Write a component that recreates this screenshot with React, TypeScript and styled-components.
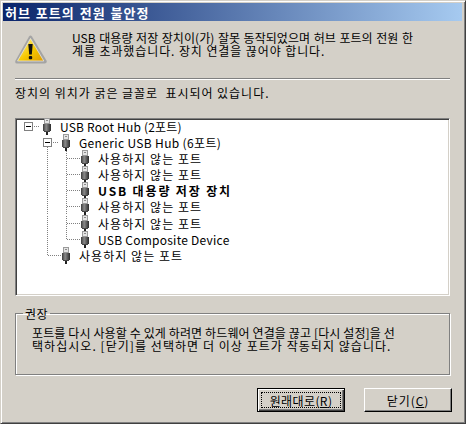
import React from 'react';
import styled, { createGlobalStyle } from 'styled-components';

const GlobalStyle = createGlobalStyle`
    html, body {
        margin: 0;
        padding: 0;
        width: 466px;
        height: 424px;
        overflow: hidden;
        background: #d4d0c8;
    }
`;

const Window = styled.div`
    box-sizing: border-box;
    width: 466px;
    height: 424px;
    display: flex;
    flex-direction: column;
    padding: 3px;
    background: #d4d0c8;
    border-top: 1px solid #d4d0c8;
    border-left: 1px solid #d4d0c8;
    border-right: 1px solid #404040;
    border-bottom: 1px solid #404040;
    box-shadow: inset 1px 1px 0 #fff, inset -1px -1px 0 #808080;
    font-family: "Noto Sans CJK KR", "Liberation Sans", sans-serif;
    font-size: 12px;
    color: #000;
`;

const TitleBar = styled.div`
    height: 18px;
    flex: none;
    display: flex;
    align-items: center;
    padding-left: 2px;
    margin: -1px 0 0 -1px;
    background: linear-gradient(90deg, #0a246a 0%, #a6caf0 100%);
    color: #fff;
    font-size: 13px;
    font-weight: 700;
    letter-spacing: 1px;
    word-spacing: 1px;
    white-space: nowrap;
`;

const Content = styled.div`
    flex: 1;
    display: flex;
    flex-direction: column;
    padding: 0 12px 0 11px;
`;

const Header = styled.div`
    display: flex;
    height: 57px;
    flex: none;
    padding-top: 10px;
    box-sizing: border-box;
`;

const Line = styled.div<{ $spacing: number; $wordGap?: number }>`
    height: 13px;
    line-height: 13px;
    white-space: pre;
    letter-spacing: ${p => p.$spacing}px;
    word-spacing: ${p => p.$wordGap ?? 0}px;
`;

const WarningSlot = styled.div`
    width: 57px;
    flex: none;
    padding-top: 4px;
`;

const Separator = styled.div`
    height: 1px;
    flex: none;
    background: #808080;
    border-bottom: 1px solid #fff;
`;

const Hint = styled.div`
    height: 38px;
    flex: none;
    padding-top: 6px;
    box-sizing: border-box;
`;

const TreeBox = styled.div`
    box-sizing: border-box;
    height: 178px;
    flex: none;
    background: #fff;
    border-top: 1px solid #808080;
    border-left: 1px solid #808080;
    border-right: 1px solid #fff;
    border-bottom: 1px solid #fff;
    box-shadow: inset 1px 1px 0 #404040, inset -1px -1px 0 #d4d0c8;
`;

const Row = styled.div`
    display: flex;
    height: 16.1px;
    align-items: stretch;
    padding-left: 3px;
`;

const RowLabel = styled.span<{ $bold?: boolean; $spacing: number }>`
    margin-left: 9px;
    line-height: 16px;
    white-space: nowrap;
    letter-spacing: ${p => p.$spacing}px;
    font-weight: ${p => (p.$bold ? 700 : 400)};
`;

const GroupBox = styled.fieldset`
    box-sizing: border-box;
    height: 68px;
    flex: none;
    margin: 11px 0 0;
    padding: 0;
    border: 1px solid #808080;
    box-shadow: inset 1px 1px 0 #fff, 1px 1px 0 #fff;
    border-radius: 0;
`;

const GroupLegend = styled.legend`
    margin-left: 7px;
    padding: 0 2px;
    line-height: 13px;
    letter-spacing: 0.5px;
`;

const GroupText = styled.div`
    margin: 6px 0 0 16px;
`;

const Footer = styled.div`
    display: flex;
    justify-content: flex-end;
    gap: 19px;
    margin: 13px -2px 0 0;
`;

const Button = styled.button<{ $default?: boolean }>`
    box-sizing: border-box;
    width: 88px;
    height: 24px;
    padding: 0;
    background: #d4d0c8;
    font: inherit;
    letter-spacing: ${p => (p.$default ? 0.4 : 0.9)}px;
    color: #000;
    position: relative;
    border: 1px solid #000;
    border-top-color: ${p => (p.$default ? '#000' : '#fff')};
    border-left-color: ${p => (p.$default ? '#000' : '#fff')};
    box-shadow: ${p =>
        p.$default
            ? 'inset 1px 1px 0 #fff, inset -1px -1px 0 #404040, inset -2px -2px 0 #808080'
            : 'inset -1px -1px 0 #808080'};
`;

const FocusRing = styled.span`
    display: flex;
    align-items: center;
    justify-content: center;
    position: absolute;
    inset: 3px;
    outline: 1px dotted #000;
    outline-offset: -1px;
`;

const GuideSvg = styled.svg`
    width: 19px;
    height: 16px;
    flex: none;
    display: block;
    overflow: visible;
`;

const IconSvg = styled.svg`
    width: 8px;
    height: 17px;
    flex: none;
    margin: -1px 0 0 5px;
    overflow: visible;
    display: block;
`;

type GuideKind = 'blank' | 'pipe' | 'tee' | 'elbow' | 'box' | 'boxPipe';

const dots = '#808080';

// one tree-line cell, drawn dot by dot like the win32 tree view
const Guide: React.FC<{ kind: GuideKind }> = ({ kind }) => {
    const vertical = kind === 'pipe' || kind === 'tee';
    const down = kind === 'boxPipe';
    return (
        <GuideSvg viewBox="0 0 19 16" shapeRendering="crispEdges">
            {(vertical || kind === 'elbow') && (
                <line x1="9.5" y1="0" x2="9.5" y2={vertical ? 16 : 8} stroke={dots} strokeDasharray="1 1" />
            )}
            {(kind === 'tee' || kind === 'elbow') && (
                <line x1="10" y1="7.5" x2="23" y2="7.5" stroke={dots} strokeDasharray="1 1" />
            )}
            {(kind === 'box' || kind === 'boxPipe') && (
                <>
                    <line x1="15" y1="7.5" x2="21" y2="7.5" stroke={dots} strokeDasharray="1 1" />
                    {down && <line x1="9.5" y1="12" x2="9.5" y2="16" stroke={dots} strokeDasharray="1 1" />}
                    <rect x="5.5" y="3.5" width="8" height="8" fill="#fff" stroke="#808080" />
                    <line x1="7" y1="7.5" x2="12" y2="7.5" stroke="#000" />
                </>
            )}
        </GuideSvg>
    );
};

const UsbIcon: React.FC = () => (
    <IconSvg viewBox="0 0 8 17" shapeRendering="crispEdges">
        <defs>
            <linearGradient id="usbBody" x1="0" x2="1" y1="0" y2="0">
                <stop offset="0" stopColor="#3a3a3a" />
                <stop offset="0.4" stopColor="#8a8a8a" />
                <stop offset="1" stopColor="#2a2a2a" />
            </linearGradient>
        </defs>
        <rect x="1.5" y="0.5" width="5" height="5" fill="#e4e4e4" stroke="#9a9a9a" />
        <rect x="3" y="2" width="2" height="1" fill="#8a8a8a" />
        <rect x="0" y="6" width="8" height="7" fill="url(#usbBody)" />
        <rect x="1" y="13" width="6" height="1" fill="#444" />
        <rect x="3" y="14" width="2" height="3" fill="#222" />
    </IconSvg>
);

const WarningSvg = styled.svg`
    display: block;
    width: 32px;
    height: 29px;
`;

const WarningIcon: React.FC = () => (
    <WarningSvg viewBox="0 0 32 29">
        <defs>
            <linearGradient id="warnFill" x1="0" x2="1" y1="0" y2="1">
                <stop offset="0" stopColor="#fff6a0" />
                <stop offset="0.55" stopColor="#f7c800" />
                <stop offset="1" stopColor="#e09a00" />
            </linearGradient>
        </defs>
        <path d="M14 1.5 Q15.5 -0.5 17 1.5 L31.5 25.5 Q32.5 28.5 29.5 28.5 L2 28.5 Q-0.5 28.5 0.5 25.5 Z" fill="#a4a4a4" />
        <path d="M15.5 3.5 L28.8 26 L2.5 26 Z" fill="url(#warnFill)" stroke="#e2e2e2" strokeWidth="0.8" />
        <path d="M13.3 9 L17.7 9 L16.8 19.5 L14.2 19.5 Z" fill="#111" />
        <rect x="13.8" y="21" width="3.4" height="3.2" rx="1" fill="#111" />
    </WarningSvg>
);

type TreeItem = { guides: GuideKind[]; label: string; spacing: number; bold?: boolean };

const unused = '사용하지 않는 포트';

const treeItems: TreeItem[] = [
    { guides: ['box'], label: 'USB Root Hub (2포트)', spacing: 0.2 },
    { guides: ['blank', 'boxPipe'], label: 'Generic USB Hub (6포트)', spacing: 0.35 },
    { guides: ['blank', 'pipe', 'tee'], label: unused, spacing: 1.05 },
    { guides: ['blank', 'pipe', 'tee'], label: unused, spacing: 1.05 },
    { guides: ['blank', 'pipe', 'tee'], label: 'USB 대용량 저장 장치', spacing: 1.85, bold: true },
    { guides: ['blank', 'pipe', 'tee'], label: unused, spacing: 1.05 },
    { guides: ['blank', 'pipe', 'tee'], label: unused, spacing: 1.05 },
    { guides: ['blank', 'pipe', 'elbow'], label: 'USB Composite Device', spacing: 0.25 },
    { guides: ['blank', 'elbow'], label: unused, spacing: 1.05 },
];

const App: React.FC = () => (
    <>
        <GlobalStyle />
        <Window>
            <TitleBar>허브 포트의 전원 불안정</TitleBar>
            <Content>
                <Header>
                    <WarningSlot>
                        <WarningIcon />
                    </WarningSlot>
                    <div>
                        <Line $spacing={0.05} $wordGap={0.8}>USB 대용량 저장 장치이(가) 잘못 동작되었으며 허브 포트의 전원 한</Line>
                        <Line $spacing={0.9}>계를 초과했습니다. 장치 연결을 끊어야 합니다.</Line>
                    </div>
                </Header>
                <Separator />
                <Hint>
                    <Line $spacing={0.97}>장치의 위치가 굵은 글꼴로  표시되어 있습니다.</Line>
                </Hint>
                <TreeBox>
                    {treeItems.map((item, index) => (
                        <Row key={index}>
                            {item.guides.map((kind, i) => (
                                <Guide key={i} kind={kind} />
                            ))}
                            <UsbIcon />
                            <RowLabel $bold={item.bold} $spacing={item.spacing}>
                                {item.label}
                            </RowLabel>
                        </Row>
                    ))}
                </TreeBox>
                <GroupBox>
                    <GroupLegend>권장</GroupLegend>
                    <GroupText>
                        <Line $spacing={0.12}>포트를 다시 사용할 수 있게 하려면 하드웨어 연결을 끊고 [다시 설정]을 선</Line>
                        <Line $spacing={1.05}>택하십시오. [닫기]를 선택하면 더 이상 포트가 작동되지 않습니다.</Line>
                    </GroupText>
                </GroupBox>
                <Footer>
                    <Button $default>
                        <FocusRing>
                            <span>
                                원래대로(<u>R</u>)
                            </span>
                        </FocusRing>
                    </Button>
                    <Button>
                        닫기(<u>C</u>)
                    </Button>
                </Footer>
            </Content>
        </Window>
    </>
);

export default App;
